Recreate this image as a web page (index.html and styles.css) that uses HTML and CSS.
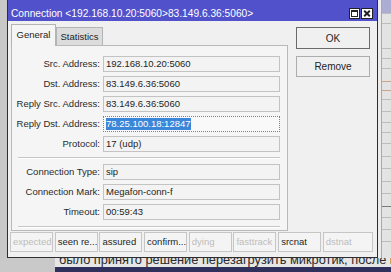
FILE: index.html
```html
<!DOCTYPE html>
<html lang="en">
<head>
    <meta charset="UTF-8">
    <meta name="viewport" content="width=device-width, initial-scale=1.0">
    <title>Connection</title>
    <link rel="stylesheet" href="styles.css">
</head>
<body>
<div class="screen">
    <div class="desk">
        <div class="gutter"></div>

        <div class="window">
            <div class="titlebar">
                <span class="title">Connection &lt;192.168.10.20:5060&gt;83.149.6.36:5060&gt;</span>
                <div class="title-btns">
                    <svg class="tb-icon" width="11" height="11" viewBox="0 0 11 11">
                        <rect x="0.5" y="0.5" width="10" height="10" fill="#fff" stroke="#222"/>
                        <rect x="2.5" y="2.5" width="6" height="6" fill="none" stroke="#222"/>
                        <line x1="2" y1="3.5" x2="9" y2="3.5" stroke="#222"/>
                    </svg>
                    <svg class="tb-icon" width="12" height="11" viewBox="0 0 12 11">
                        <rect x="0.5" y="0.5" width="11" height="10" fill="#fff" stroke="#222"/>
                        <path d="M3.2 2.8 L8.8 8.2 M8.8 2.8 L3.2 8.2" stroke="#222" stroke-width="2"/>
                    </svg>
                </div>
            </div>

            <div class="win-body">
                <div class="main">
                    <div class="tabs">
                        <div class="tab active">General</div>
                        <div class="tab">Statistics</div>
                    </div>
                    <div class="panel">
                        <div class="form">
                            <label>Src. Address:</label>
                            <div class="field">192.168.10.20:5060</div>
                            <label>Dst. Address:</label>
                            <div class="field">83.149.6.36:5060</div>
                            <label>Reply Src. Address:</label>
                            <div class="field">83.149.6.36:5060</div>
                            <label>Reply Dst. Address:</label>
                            <div class="field focused"><span class="selected">78.25.100.18:12847</span></div>
                            <label>Protocol:</label>
                            <div class="field">17 (udp)</div>
                        </div>
                        <div class="sep"></div>
                        <div class="form">
                            <label>Connection Type:</label>
                            <div class="field">sip</div>
                            <label>Connection Mark:</label>
                            <div class="field">Megafon-conn-f</div>
                            <label>Timeout:</label>
                            <div class="field">00:59:43</div>
                        </div>
                        <div class="sep sep-last"></div>
                    </div>
                </div>
                <div class="side">
                    <button class="btn default">OK</button>
                    <button class="btn">Remove</button>
                </div>
            </div>

            <div class="status">
                <div class="cell off">expected</div>
                <div class="cell">seen re...</div>
                <div class="cell">assured</div>
                <div class="cell">confirm...</div>
                <div class="cell off">dying</div>
                <div class="cell off">fasttrack</div>
                <div class="cell">srcnat</div>
                <div class="cell off">dstnat</div>
            </div>
        </div>

        <div class="strip">
            <div class="strip-gap"></div>
            <div class="strip-list">
                <div class="row head"></div>
                <div class="row r9"></div>
                <div class="row r24"></div>
                <div class="row r9"></div>
                <div class="row r9"></div>
                <div class="row r12 tan"></div>
                <div class="row r8 tan"></div>
                <div class="row r8"></div>
                <div class="row r11"></div>
                <div class="row r10"></div>
                <div class="row r9"></div>
                <div class="row r10"></div>
                <div class="row r12"></div>
                <div class="row r11"></div>
                <div class="row r12"></div>
                <div class="row r11"></div>
                <div class="row r12 dark"></div>
                <div class="row r10"></div>
                <div class="row r11"></div>
                <div class="row r11"></div>
            </div>
        </div>
    </div>

    <div class="below">
        <div class="below-gap"></div>
        <div class="page">
            <div class="page-text"><p>было принято решение перезагрузить микротик, после п</p></div>
            <div class="page-bar"></div>
        </div>
    </div>
</div>
</body>
</html>
```

FILE: styles.css
```css
body {
    margin: 0;
    font-family: "Liberation Sans", Arial, sans-serif;
    background-color: #c9c9c9;
}

.screen {
    width: 391px;
    height: 272px;
    overflow: hidden;
}

.desk {
    display: flex;
    height: 258px;
}

.gutter {
    width: 7px;
    background-color: #c8c8c8;
}

/* Окно Connection */
.window {
    box-sizing: border-box;
    width: 371px;
    height: 258px;
    display: flex;
    flex-direction: column;
    background-color: #f0f0f0;
    border: 1px solid #2e2e2e;
    border-top: none;
    padding-bottom: 5px;
}

.titlebar {
    box-sizing: border-box;
    height: 21px;
    padding: 5px 4px 0 3px;
    display: flex;
    align-items: center;
    justify-content: space-between;
    background-color: #5151cb;
    color: #fff;
    font-size: 10.2px;
}

.title-btns {
    display: flex;
    gap: 1px;
}

.tb-icon {
    display: block;
}

.win-body {
    display: flex;
    padding: 3px 0 0 3px;
}

.main {
    width: 277px;
}

.tabs {
    display: flex;
    align-items: flex-end;
    height: 21px;
}

.tab {
    box-sizing: border-box;
    height: 18px;
    width: 47px;
    border: 1px solid #b4b4b4;
    border-bottom: none;
    background-color: #dcdcdc;
    font-size: 9.5px;
    color: #1e1e1e;
    text-align: center;
    line-height: 17px;
}

.tab.active {
    width: 45px;
    height: 22px;
    margin-bottom: -1px;
    background-color: #f5f5f5;
    line-height: 19px;
    position: relative;
}

.panel {
    box-sizing: border-box;
    height: 186px;
    border: 1px solid #b9b9b9;
    background-color: #f5f5f5;
    padding: 10px 7px 0 0;
}

.form {
    display: grid;
    grid-template-columns: 88px 177px;
    grid-auto-rows: 16px;
    column-gap: 3px;
    row-gap: 4px;
}

.form label {
    font-size: 9.5px;
    line-height: 16px;
    text-align: right;
    color: #2a2a2a;
    white-space: nowrap;
}

.field {
    box-sizing: border-box;
    border: 1px solid #c3c3c3;
    background-color: #f3f3f3;
    padding-left: 2px;
    font-size: 9.5px;
    line-height: 14px;
    color: #1e1e1e;
    white-space: nowrap;
}

.field.focused {
    border: 1px dotted #9b7b5c;
    background-color: #f9f9f9;
}

.selected {
    display: inline-block;
    background-color: #3a86d8;
    color: #fff;
    line-height: 12px;
    margin-top: 1px;
}

.sep {
    height: 0;
    margin: 5px 0 5px 6px;
    border-top: 1px solid #c6c6c6;
    border-bottom: 1px solid #fff;
}

.sep-last {
    margin-top: 6px;
}

.side {
    display: flex;
    flex-direction: column;
    gap: 7px;
    margin-left: 8px;
    padding-top: 3px;
}

.btn {
    box-sizing: border-box;
    width: 74px;
    height: 21px;
    border: 1px solid #adadad;
    background-color: #f0f0f0;
    font-family: "Liberation Sans", Arial, sans-serif;
    font-size: 10px;
    color: #1e1e1e;
    padding: 0;
}

.btn.default {
    height: 22px;
    border-color: #6a6a6a;
}

.status {
    display: grid;
    grid-template-columns: repeat(7, 43px) 1fr;
    column-gap: 1.7px;
    margin: 1px 4px 0 2px;
}

.cell {
    box-sizing: border-box;
    height: 20px;
    border: 1px solid #c6c6c6;
    background-color: #f4f4f4;
    padding-left: 2px;
    font-size: 9.5px;
    line-height: 18px;
    color: #1e1e1e;
    white-space: nowrap;
    overflow: hidden;
}

.cell.off {
    color: #bcbcbc;
}

/* Список позади окна */
.strip {
    flex: 1;
    display: flex;
}

.strip-gap {
    width: 3px;
    background-color: #ececec;
    border-right: 1px solid #a9a9a9;
}

.strip-list {
    flex: 1;
    background-color: #e3e3e3;
}

.row {
    border-bottom: 1px solid #bdbdbd;
}

.row.head { height: 13px; background-color: #adadd3; }
.row.r8 { height: 8px; }
.row.r9 { height: 9px; }
.row.r10 { height: 10px; }
.row.r11 { height: 11px; }
.row.r12 { height: 12px; }
.row.r24 { height: 24px; }
.row.tan { border-bottom-color: #c8a488; }
.row.dark { border-bottom-color: #7a7a7a; }

/* Текст страницы под окном */
.below {
    display: flex;
    height: 14px;
}

.below-gap {
    width: 55px;
    background-color: #c9c9c9;
}

.page {
    flex: 1;
    display: flex;
    flex-direction: column;
    background-color: #e6e6e6;
    overflow: hidden;
}

.page-text {
    height: 9px;
    overflow: hidden;
}

.page-text p {
    margin: -5px 0 0 0;
    padding-left: 4px;
    font-size: 12.8px;
    line-height: 14px;
    color: #2a2a2a;
    white-space: nowrap;
}

.page-bar {
    flex: 1;
    background-color: #2f305c;
}
```
